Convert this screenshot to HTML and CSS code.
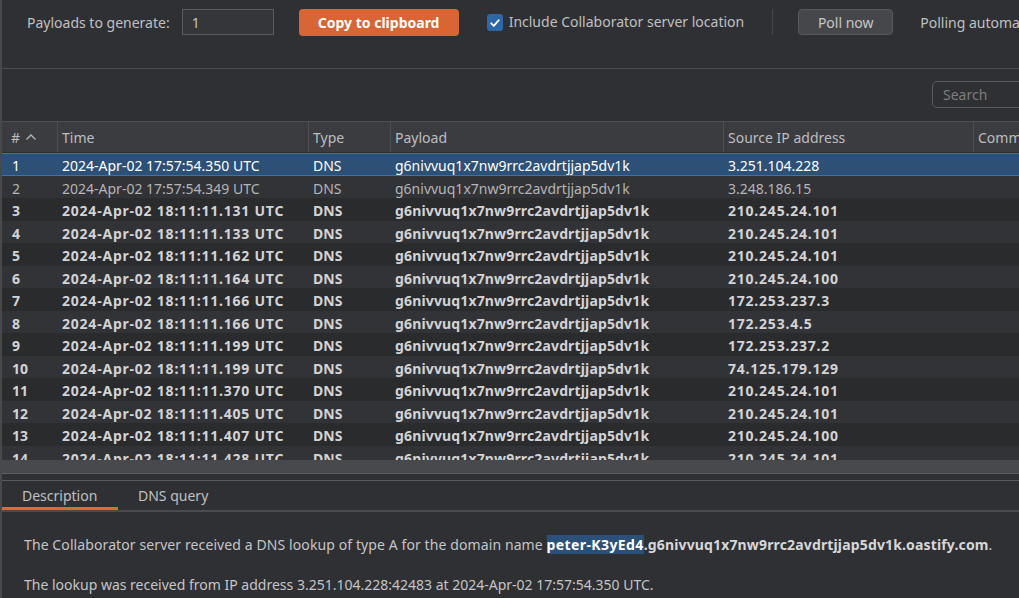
FILE: index.html
```html
<!DOCTYPE html>
<html>
<head>
<meta charset="utf-8">
<link rel="stylesheet" href="styles.css">
</head>
<body>
<div class="app">
  <div class="toolbar">
    <span class="label">Payloads to generate:</span>
    <div class="num-input">1</div>
    <button class="btn-primary">Copy to clipboard</button>
    <span class="checkbox"><svg width="12" height="12" viewBox="0 0 12 12"><path d="M2.2 6.3 L4.8 8.8 L9.8 3.2" fill="none" stroke="#fff" stroke-width="1.8" stroke-linecap="round" stroke-linejoin="round"/></svg></span>
    <span class="label check-label">Include Collaborator server location</span>
    <span class="vsep"></span>
    <button class="btn-secondary">Poll now</button>
    <span class="label polling">Polling automatically</span>
  </div>
  <div class="searchbar">
    <div class="search">Search</div>
  </div>
  <div class="table">
    <div class="thead">
      <div class="th c-num"># <svg class="sort" width="12" height="8" viewBox="0 0 12 8"><path d="M1.5 6.5 L6 2 L10.5 6.5" fill="none" stroke="#b8b8b8" stroke-width="1.3"/></svg></div>
      <div class="th">Time</div>
      <div class="th">Type</div>
      <div class="th">Payload</div>
      <div class="th">Source IP address</div>
      <div class="th last">Comment</div>
    </div>
    <div class="tbody">
      <div class="tr selected"><div class="td c-num">1</div><div class="td t">2024-Apr-02 17:57:54.350 UTC</div><div class="td">DNS</div><div class="td p">g6nivvuq1x7nw9rrc2avdrtjjap5dv1k</div><div class="td ip">3.251.104.228</div><div class="td"></div></div>
      <div class="tr read"><div class="td c-num">2</div><div class="td t">2024-Apr-02 17:57:54.349 UTC</div><div class="td">DNS</div><div class="td p">g6nivvuq1x7nw9rrc2avdrtjjap5dv1k</div><div class="td ip">3.248.186.15</div><div class="td"></div></div>
      <div class="tr"><div class="td c-num">3</div><div class="td t">2024-Apr-02 18:11:11.131 UTC</div><div class="td">DNS</div><div class="td p">g6nivvuq1x7nw9rrc2avdrtjjap5dv1k</div><div class="td ip">210.245.24.101</div><div class="td"></div></div>
      <div class="tr"><div class="td c-num">4</div><div class="td t">2024-Apr-02 18:11:11.133 UTC</div><div class="td">DNS</div><div class="td p">g6nivvuq1x7nw9rrc2avdrtjjap5dv1k</div><div class="td ip">210.245.24.101</div><div class="td"></div></div>
      <div class="tr"><div class="td c-num">5</div><div class="td t">2024-Apr-02 18:11:11.162 UTC</div><div class="td">DNS</div><div class="td p">g6nivvuq1x7nw9rrc2avdrtjjap5dv1k</div><div class="td ip">210.245.24.101</div><div class="td"></div></div>
      <div class="tr"><div class="td c-num">6</div><div class="td t">2024-Apr-02 18:11:11.164 UTC</div><div class="td">DNS</div><div class="td p">g6nivvuq1x7nw9rrc2avdrtjjap5dv1k</div><div class="td ip">210.245.24.100</div><div class="td"></div></div>
      <div class="tr"><div class="td c-num">7</div><div class="td t">2024-Apr-02 18:11:11.166 UTC</div><div class="td">DNS</div><div class="td p">g6nivvuq1x7nw9rrc2avdrtjjap5dv1k</div><div class="td ip">172.253.237.3</div><div class="td"></div></div>
      <div class="tr"><div class="td c-num">8</div><div class="td t">2024-Apr-02 18:11:11.166 UTC</div><div class="td">DNS</div><div class="td p">g6nivvuq1x7nw9rrc2avdrtjjap5dv1k</div><div class="td ip">172.253.4.5</div><div class="td"></div></div>
      <div class="tr"><div class="td c-num">9</div><div class="td t">2024-Apr-02 18:11:11.199 UTC</div><div class="td">DNS</div><div class="td p">g6nivvuq1x7nw9rrc2avdrtjjap5dv1k</div><div class="td ip">172.253.237.2</div><div class="td"></div></div>
      <div class="tr"><div class="td c-num">10</div><div class="td t">2024-Apr-02 18:11:11.199 UTC</div><div class="td">DNS</div><div class="td p">g6nivvuq1x7nw9rrc2avdrtjjap5dv1k</div><div class="td ip">74.125.179.129</div><div class="td"></div></div>
      <div class="tr"><div class="td c-num">11</div><div class="td t">2024-Apr-02 18:11:11.370 UTC</div><div class="td">DNS</div><div class="td p">g6nivvuq1x7nw9rrc2avdrtjjap5dv1k</div><div class="td ip">210.245.24.101</div><div class="td"></div></div>
      <div class="tr"><div class="td c-num">12</div><div class="td t">2024-Apr-02 18:11:11.405 UTC</div><div class="td">DNS</div><div class="td p">g6nivvuq1x7nw9rrc2avdrtjjap5dv1k</div><div class="td ip">210.245.24.101</div><div class="td"></div></div>
      <div class="tr"><div class="td c-num">13</div><div class="td t">2024-Apr-02 18:11:11.407 UTC</div><div class="td">DNS</div><div class="td p">g6nivvuq1x7nw9rrc2avdrtjjap5dv1k</div><div class="td ip">210.245.24.100</div><div class="td"></div></div>
      <div class="tr"><div class="td c-num">14</div><div class="td t">2024-Apr-02 18:11:11.428 UTC</div><div class="td">DNS</div><div class="td p">g6nivvuq1x7nw9rrc2avdrtjjap5dv1k</div><div class="td ip">210.245.24.101</div><div class="td"></div></div>
    </div>
    <div class="hscroll"></div>
  </div>
  <div class="splitter"></div>
  <div class="tabs">
    <div class="tab active">Description</div>
    <div class="tab">DNS query</div>
  </div>
  <div class="desc">
    <p><span class="lead">The Collaborator server received a DNS lookup of type A for the domain name </span><b class="hl">peter-K3yEd4</b><b>.g6nivvuq1x7nw9rrc2avdrtjjap5dv1k.oastify.com</b>.</p>
    <p>The lookup was received from IP address 3.251.104.228:42483 at 2024-Apr-02 17:57:54.350 UTC.</p>
  </div>
</div>
</body>
</html>
```

FILE: styles.css
```css
* { box-sizing: border-box; }
html, body { margin: 0; padding: 0; }
body {
  width: 1019px;
  height: 598px;
  overflow: hidden;
  background: #2f3033;
  font-family: "Noto Sans", "Open Sans", sans-serif;
  font-size: 14px;
  color: #c4c4c4;
}
.app {
  height: 598px;
  border-left: 2px solid #48494b;
  display: flex;
  flex-direction: column;
}
.toolbar {
  height: 69px;
  flex: none;
  display: flex;
  align-items: flex-start;
  padding: 9px 0 0 25px;
  border-bottom: 1px solid #4a4b4e;
  white-space: nowrap;
  overflow: hidden;
}
.toolbar > * { flex: none; }
.label {
  line-height: 26px;
  padding-top: 1px;
  color: #bfc0c2;
}
.check-label { padding-top: 0; }
.num-input {
  width: 92px;
  height: 26px;
  margin-left: 12px;
  background: #35363a;
  border: 1px solid #5a5b5e;
  padding-left: 9px;
  line-height: 25px;
  color: #c4c4c4;
}
button {
  font-family: inherit;
  font-size: 14px;
  cursor: default;
}
.btn-primary {
  height: 27px;
  width: 160px;
  margin-left: 25px;
  background: #d86533;
  border: none;
  border-radius: 4px;
  color: #ffffff;
  font-weight: 700;
  padding: 0;
}
.checkbox {
  width: 16px;
  height: 17px;
  margin: 5px 0 0 28px;
  background: #2d67a8;
  border-radius: 3px;
  display: flex;
  align-items: center;
  justify-content: center;
}
.check-label { margin-left: 6px; }
.vsep {
  width: 1px;
  height: 26px;
  background: #46474a;
  margin-left: 28px;
}
.btn-secondary {
  height: 26px;
  width: 95px;
  margin-left: 25px;
  background: #46474a;
  border: 1px solid #58595c;
  border-radius: 4px;
  color: #c8c8c8;
  padding: 0;
}
.polling { margin-left: 27px; }
.searchbar {
  height: 52px;
  flex: none;
  display: flex;
  justify-content: flex-end;
  padding-top: 12px;
  overflow: hidden;
}
.search {
  width: 100px;
  height: 27px;
  margin-right: -13px;
  border: 1px solid #5a5b5e;
  border-radius: 5px;
  padding-left: 10px;
  line-height: 26px;
  color: #7c7d80;
  flex: none;
}
.table {
  flex: none;
  border-top: 1px solid #4f5053;
  display: flex;
  flex-direction: column;
}
.thead, .tr {
  display: grid;
  grid-template-columns: 56px 251px 82px 333px 250px 1fr;
}
.thead {
  height: 31px;
  background: #3b3c3f;
  border-bottom: 1px solid #2c2d2f;
}
.th {
  display: flex;
  align-items: center;
  padding-left: 4px;
  border-right: 1px solid #4d4e51;
  color: #bdbec0;
  white-space: nowrap;
  overflow: hidden;
}
.th.last { border-right: none; }
.th.c-num { padding-left: 9px; }
.sort { margin-left: 5px; }
.tbody {
  height: 307px;
  overflow: hidden;
}
.tr {
  height: 22.5px;
  font-weight: 700;
  color: #d2d3d5;
  background: #2a2b2d;
}
.tr:nth-child(even) { background: #323336; }
.tr.read { font-weight: 400; color: #b4b5b7; }
.tr.selected {
  font-weight: 400;
  color: #ffffff;
  background: #2d5076;
  box-shadow: inset 0 1px 0 #3c73ad, inset 0 -1px 0 #3c73ad;
}
.td {
  padding: 2px 0 0 4px;
  line-height: 22px;
  white-space: nowrap;
}
.td.c-num { padding-left: 10px; }
.tr:not(.read):not(.selected) .t,
.tr:not(.read):not(.selected) .ip { letter-spacing: 0.78px; }
.tr:not(.read):not(.selected) .p { letter-spacing: 0.15px; }
.hscroll {
  height: 13px;
  background: #48494c;
}
.splitter {
  flex: none;
  height: 8px;
  border-top: 1px solid #5a5b5e;
  border-bottom: 1px solid #5a5b5e;
}
.tabs {
  flex: none;
  height: 31px;
  display: flex;
  border-bottom: 2px solid #4a4b4e;
}
.tab {
  padding: 1px 19px 0 20px;
  line-height: 27px;
  color: #bfc0c2;
}
.tab.active {
  width: 116px;
  border-bottom: 3px solid #e0692f;
}
.desc {
  flex: 1;
  padding: 23px 0 0 22px;
  color: #c4c5c7;
  white-space: nowrap;
}
.desc p {
  margin: 0 0 20px;
  line-height: 20px;
}
.desc .lead { letter-spacing: 0.1px; }
.desc b { color: #d6d7d9; letter-spacing: 0.15px; }
.desc b.hl {
  background: #2b5079;
  color: #ffffff;
  letter-spacing: 0.4px;
}
```
